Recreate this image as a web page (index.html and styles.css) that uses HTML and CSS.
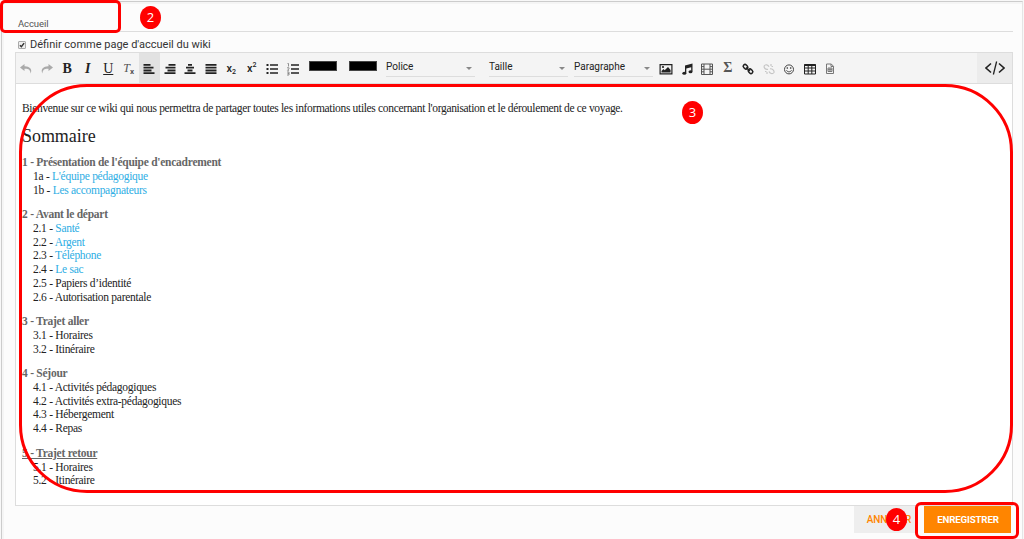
FILE: index.html
```
<!DOCTYPE html>
<html lang="fr">
<head>
<meta charset="utf-8">
<title>Wiki - Accueil</title>
<link rel="stylesheet" href="styles.css">
</head>
<body>
<div class="page">
  <main class="panel">
    <div class="title-field"><span>Accueil</span></div>
    <label class="home-option"><span class="check"><svg viewBox="0 0 8 8"><path d="M1.2 4.200 3.200 6.300 6.800 1.400" fill="none" stroke="#333" stroke-width="1.900"/></svg></span><span>Définir comme page d'accueil du wiki</span></label>
    <section class="editor">
      <div class="toolbar">
        <div class="group">
          <span class="tool muted"><svg viewBox="0 0 14 14"><path d="M5.500 2 1 5.500 5.500 9V6.800C9 6.500 11.500 7.500 11.500 11.500 14 7 10 4 5.500 4.200Z"/></svg></span>
          <span class="tool muted"><svg viewBox="0 0 14 14"><path d="M8.500 2 13 5.500 8.500 9V6.800C5 6.500 2.500 7.500 2.500 11.500 0 7 4 4 8.500 4.200Z"/></svg></span>
          <span class="tool serif bold">B</span>
          <span class="tool serif bold italic">I</span>
          <span class="tool serif under">U</span>
          <span class="tool clear"><i>T</i><small>x</small></span>
          <span class="tool active"><svg viewBox="0 0 14 14"><path d="M1.500 2h7v1.800h-7zM1.500 4.800h10v1.800h-10zM1.500 7.600h8v1.800h-8zM1.500 10.300h11v1.700h-11z"/></svg></span>
          <span class="tool"><svg viewBox="0 0 14 14"><path d="M5.500 2h7v1.800h-7zM2.500 4.800h10v1.800h-10zM4.500 7.600h8v1.800h-8zM1.500 10.300h11v1.700h-11z"/></svg></span>
          <span class="tool"><svg viewBox="0 0 14 14"><path d="M5 2h4v1.800H5zM3 4.800h8v1.800H3zM4.500 7.600h5v1.800h-5zM1.500 10.300h11v1.700h-11z"/></svg></span>
          <span class="tool"><svg viewBox="0 0 14 14"><path d="M1.500 2h11v1.800h-11zM1.500 4.800h11v1.800h-11zM1.500 7.600h11v1.800h-11zM1.500 10.300h11v1.700h-11z"/></svg></span>
          <span class="tool script">x<sub>2</sub></span>
          <span class="tool script">x<sup>2</sup></span>
          <span class="tool"><svg viewBox="0 0 14 14"><path d="M1.500 2h2v2h-2zM1.500 6h2v2h-2zM1.500 10h2v2h-2zM5 2.300h8v1.500H5zM5 6.300h8v1.500H5zM5 10.300h8v1.500H5z"/></svg></span>
          <span class="tool"><svg viewBox="0 0 14 14"><path d="M5 2.300h8v1.500H5zM5 6.300h8v1.500H5zM5 10.300h8v1.500H5z"/><path d="M1.500 1.500h1v3M1 5.800h2v1l-1.500 1.500H3M1 10h2v3H1M1.500 11.500H3" fill="none" stroke="#777" stroke-width=".8"/></svg></span>
        </div>
        <span class="swatch"></span>
        <span class="swatch second"></span>
        <div class="select wide"><span>Police</span><i class="caret"></i></div>
        <div class="select size"><span>Taille</span><i class="caret"></i></div>
        <div class="select para"><span>Paragraphe</span><i class="caret"></i></div>
        <div class="group media">
          <span class="tool"><svg viewBox="0 0 14 14"><path fill-rule="evenodd" d="M.500 2h13v10.500H.500zM1.700 3.200v8.100h10.600V3.200z"/><path d="M2.500 10.600V9l2-2 1.200 1.200L9 5l2.600 3v2.600z"/><circle cx="4" cy="5" r="1.100"/></svg></span>
          <span class="tool"><svg viewBox="0 0 14 14"><path d="M5 3.500 12.500 1.500V9.500H11.200V5.200L6.300 6.400V11H5z"/><ellipse cx="4.300" cy="11.200" rx="2" ry="1.500"/><ellipse cx="10.500" cy="9.700" rx="2" ry="1.500"/></svg></span>
          <span class="tool"><svg viewBox="0 0 14 14"><path d="M1.500 2h11v10.500h-11zM4 2v10.500M10 2v10.500M4 7.200h6M1.500 4.600H4M1.500 7.200H4M1.500 9.800H4M10 4.600h2.500M10 7.200h2.500M10 9.800h2.500" fill="none" stroke="#555" stroke-width="1"/></svg></span>
          <span class="tool sigma">Σ</span>
          <span class="tool"><svg viewBox="0 0 14 14"><g fill="none" stroke="#222" stroke-width="1.500"><rect x="2" y="3" width="5" height="3.600" rx="1.800" transform="rotate(45 4.500 4.800)"/><rect x="7" y="7.500" width="5" height="3.600" rx="1.800" transform="rotate(45 9.500 9.300)"/><path d="m5 5.500 4 3.500"/></g></svg></span>
          <span class="tool"><svg viewBox="0 0 14 14"><g fill="none" stroke="#c5c5c5" stroke-width="1.200"><path d="M6 7.300C3.500 8 1.500 5.500 2.200 4 3.500 1.800 6 2.800 7 4.800M8 6.800c2.500-.3 4.500 2 4 3.700-1.500 2-4.200 1-5-1M9 2v2M11 4.500H9.500M3 9.500h1.500M5 12v-2"/></g></svg></span>
          <span class="tool"><svg viewBox="0 0 14 14"><circle cx="7" cy="7.400" r="4.500" fill="none" stroke="#444"/><circle cx="5.300" cy="6" r=".8"/><circle cx="8.700" cy="6" r=".8"/><path d="M4.500 8.300c1 2 4 2 5 0" fill="none" stroke="#444"/></svg></span>
          <span class="tool"><svg viewBox="0 0 14 14"><path d="M1.500 2.500h11V12h-11zM1.500 6h11M1.500 9h11M5.200 3v9M8.800 3v9" fill="none" stroke="#222" stroke-width="1"/><path d="M1.500 2.200h11V4h-11z"/></svg></span>
          <span class="tool"><svg viewBox="0 0 14 14"><path d="M3.500 2h4.800l2.200 2.300v7.200h-7zM8 2v2.500h2.500M5 6h4v3.500H5zM5 7.700h4M7 6v3.500" fill="none" stroke="#777" stroke-width="1"/></svg></span>
        </div>
        <span class="code"><svg viewBox="0 0 20 16"><path d="M6 3.500 1 8l5 4.500M14 3.500 19 8l-5 4.500" fill="none" stroke="#222" stroke-width="1.600"/><path d="M11.600 1.500 8.400 14.500" stroke="#222" stroke-width="1.300"/></svg></span>
      </div>
      <article class="content">
        <p class="intro">Bienvenue sur ce wiki qui nous permettra de partager toutes les informations utiles concernant l'organisation et le déroulement de ce voyage.</p>
        <h1>Sommaire</h1>
        <section class="chapter"><h2>1 - Présentation de l'équipe d'encadrement</h2><p>1a - <a>L'équipe pédagogique</a></p><p>1b - <a>Les accompagnateurs</a></p></section>
        <section class="chapter"><h2>2 - Avant le départ</h2><p>2.1 - <a>Santé</a></p><p>2.2 - <a>Argent</a></p><p>2.3 - <a>Téléphone</a></p><p>2.4 - <a>Le sac</a></p><p>2.5 - Papiers d’identité</p><p>2.6 - Autorisation parentale</p></section>
        <section class="chapter"><h2>3 - Trajet aller</h2><p>3.1 - Horaires</p><p>3.2 - Itinéraire</p></section>
        <section class="chapter"><h2>4 - Séjour</h2><p>4.1 - Activités pédagogiques</p><p>4.2 - Activités extra-pédagogiques</p><p>4.3 - Hébergement</p><p>4.4 - Repas</p></section>
        <section class="chapter"><h2 class="underlined">5 - Trajet retour</h2><p>5.1 - Horaires</p><p>5.2 - Itinéraire</p></section>
      </article>
    </section>
    <div class="actions"><span class="button cancel">ANNULER</span><span class="button save">ENREGISTRER</span></div>
  </main>
  <div class="mark mark-title"></div>
  <div class="mark mark-content"></div>
  <div class="mark mark-save"></div>
  <span class="badge badge-two">2</span>
  <span class="badge badge-three">3</span>
  <span class="badge badge-four">4</span>
</div>
</body>
</html>
```
FILE: styles.css
```
* { box-sizing: border-box; }
body { margin: 0; background: #fcfcfc; font-family: Roboto, sans-serif; color: #333; }
.page { position: relative; width: 1024px; height: 539px; overflow: hidden; padding: 1px 0 0 1px; background: #f8f8f8; }
.panel { width: 1022px; height: 538px; border: 1px solid #ccc; border-right-color: #e5e5e5; border-bottom: 0; padding: 0 9px 0 13px; background: #fcfcfc; box-shadow: inset 2px 2px 0 #f5f5f5; }
.title-field { height: 30px; border-bottom: 1px solid #ddd; padding: 16px 0 0 3px; font-size: 9.5px; line-height: 12px; letter-spacing: -.1px; color: #555; }
.home-option { display: flex; align-items: center; height: 20px; padding: 5px 0 0 3px; gap: 4px; font-size: 11px; line-height: 14px; white-space: nowrap; }
.check { display: flex; width: 8px; height: 8px; border: 1px solid #aaa; border-radius: 1px; background: #eee; }
.check svg { width: 6px; height: 6px; }
.editor { height: 454px; border: 1px solid #ddd; background: #fff; }
.toolbar { display: flex; height: 31px; background: #f4f4f4; border-bottom: 1px solid #ddd; }
.group { display: flex; flex: none; }
.tool { display: flex; align-items: center; justify-content: center; width: 20.5px; height: 30px; padding-top: 1px; font-size: 12px; color: #222; }
.tool svg { width: 14px; height: 14px; fill: #222; }
.muted svg { fill: #aaa; }
.active { background: #e2e2e2; }
.serif { font: 14px "Liberation Serif", serif; }
.bold { font-weight: 700; }
.italic { font-style: italic; }
.under { text-decoration: underline; }
.clear { font-family: "Liberation Serif", serif; color: #555; padding-top: 0; }
.clear small { font: bold 8px Roboto, sans-serif; padding-top: 6px; }
.script { font-weight: 500; font-size: 11px; }
.script sub, .script sup { font-size: 7px; line-height: 8px; }
.script sub { padding-top: 7px; }
.script sup { padding-bottom: 7px; }
.sigma { font: bold 14px "Liberation Serif", serif; color: #555; padding: 0; }
.swatch { flex: none; width: 28px; height: 10px; margin: 8px 0 0 6px; background: #000; border: 1px solid #444; }
.second { margin-left: 12px; }
.select { display: flex; flex: none; justify-content: space-between; align-items: center; height: 24px; border-bottom: 1px solid #ddd; font-size: 10px; padding: 3px 3px 0 0; color: #222; }
.wide { width: 89px; margin-left: 9px; }
.size { width: 79px; margin-left: 14px; }
.para { width: 79px; margin-left: 6px; }
.caret { border: 3px solid transparent; border-top-color: #888; border-bottom: 0; margin-top: 5px; }
.media { margin-left: 3px; }
.code { display: flex; align-items: center; justify-content: center; width: 35px; height: 30px; margin-left: auto; background: #ececec; }
.code svg { width: 20px; height: 16px; }
.content { padding: 17.5px 6px 0; font-family: "Liberation Serif", serif; font-size: 11.5px; letter-spacing: -.28px; line-height: 13.7px; color: #222; white-space: nowrap; }
.content p, .content h1, .content h2 { margin: 0; }
.content .intro { letter-spacing: -.335px; }
.content h1 { font-size: 18px; font-weight: 400; letter-spacing: -.05px; line-height: 22px; margin: 10px 0 9px; }
.content h2 { font-size: 11.5px; letter-spacing: -.25px; line-height: 13.7px; color: #666; }
.chapter { margin-bottom: 11px; }
.chapter p { padding-left: 11px; }
.content a { color: #2eaee4; }
.content .underlined { text-decoration: underline; }
.actions { display: flex; justify-content: flex-end; gap: 7px; padding-right: 2px; }
.button { display: flex; align-items: center; justify-content: center; height: 27px; padding-bottom: 1px; font-size: 10px; font-weight: 500; }
.cancel { width: 63px; background: #eee; color: #ff8500; padding-left: 7px; }
.save { width: 87px; background: #ff8500; color: #fff; font-weight: 700; font-size: 9.7px; letter-spacing: -.15px; padding-left: 1px; }
.mark { position: absolute; border: 3px solid #f00; }
.mark-title { left: 0; top: 0; width: 121px; height: 33px; border-radius: 5px; }
.mark-content { left: 19px; top: 84px; width: 994px; height: 409px; border-radius: 68px; }
.mark-save { left: 915px; top: 502px; width: 104px; height: 37px; border-radius: 6px; }
.badge { position: absolute; width: 21px; height: 23px; border-radius: 50%; background: #f00; color: #fff; font: 500 13px/22px "Open Sans", sans-serif; text-align: center; }
.badge-two { left: 140px; top: 6px; }
.badge-three { left: 682px; top: 101px; }
.badge-four { left: 886px; top: 508px; }
```
